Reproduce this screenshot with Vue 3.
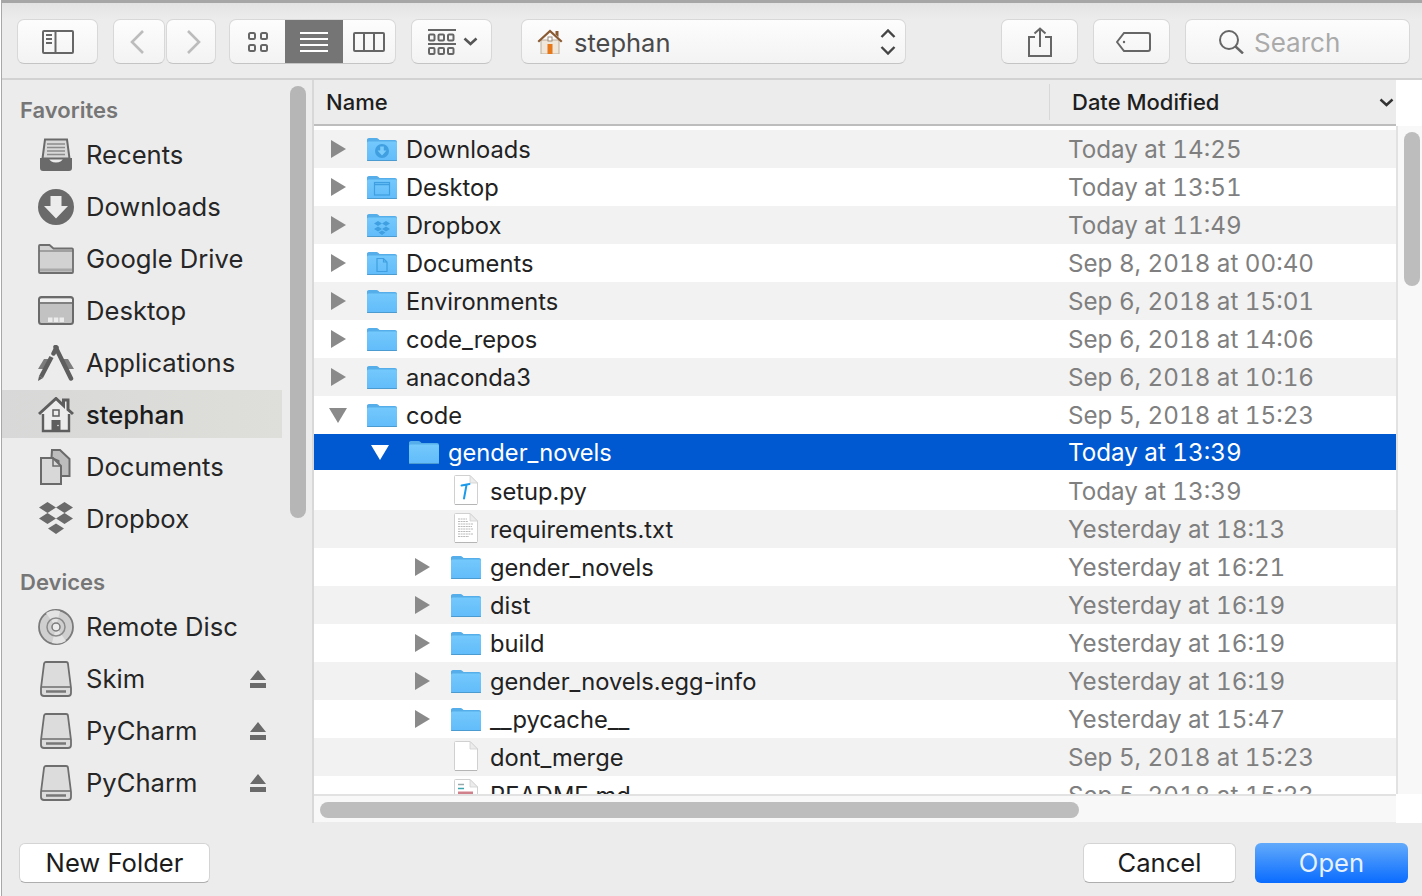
<script setup>
const favorites = [
  { label: 'Recents', icon: 'side-recents' },
  { label: 'Downloads', icon: 'side-downloads' },
  { label: 'Google Drive', icon: 'side-folder' },
  { label: 'Desktop', icon: 'side-desktop' },
  { label: 'Applications', icon: 'side-apps' },
  { label: 'stephan', icon: 'side-home', active: true },
  { label: 'Documents', icon: 'side-docs' },
  { label: 'Dropbox', icon: 'side-dropbox' }
]

const devices = [
  { label: 'Remote Disc', icon: 'side-disc' },
  { label: 'Skim', icon: 'side-drive', eject: true },
  { label: 'PyCharm', icon: 'side-drive', eject: true },
  { label: 'PyCharm', icon: 'side-drive', eject: true }
]

const rows = [
  { name: 'Downloads', date: 'Today at 14:25', level: 0, icon: 'folder-downloads', twisty: 'closed' },
  { name: 'Desktop', date: 'Today at 13:51', level: 0, icon: 'folder-desktop', twisty: 'closed' },
  { name: 'Dropbox', date: 'Today at 11:49', level: 0, icon: 'folder-dropbox', twisty: 'closed' },
  { name: 'Documents', date: 'Sep 8, 2018 at 00:40', level: 0, icon: 'folder-documents', twisty: 'closed' },
  { name: 'Environments', date: 'Sep 6, 2018 at 15:01', level: 0, icon: 'folder', twisty: 'closed' },
  { name: 'code_repos', date: 'Sep 6, 2018 at 14:06', level: 0, icon: 'folder', twisty: 'closed' },
  { name: 'anaconda3', date: 'Sep 6, 2018 at 10:16', level: 0, icon: 'folder', twisty: 'closed' },
  { name: 'code', date: 'Sep 5, 2018 at 15:23', level: 0, icon: 'folder', twisty: 'open' },
  { name: 'gender_novels', date: 'Today at 13:39', level: 1, icon: 'folder', twisty: 'open', selected: true },
  { name: 'setup.py', date: 'Today at 13:39', level: 2, icon: 'file-py' },
  { name: 'requirements.txt', date: 'Yesterday at 18:13', level: 2, icon: 'file-txt' },
  { name: 'gender_novels', date: 'Yesterday at 16:21', level: 2, icon: 'folder', twisty: 'closed' },
  { name: 'dist', date: 'Yesterday at 16:19', level: 2, icon: 'folder', twisty: 'closed' },
  { name: 'build', date: 'Yesterday at 16:19', level: 2, icon: 'folder', twisty: 'closed' },
  { name: 'gender_novels.egg-info', date: 'Yesterday at 16:19', level: 2, icon: 'folder', twisty: 'closed' },
  { name: '__pycache__', date: 'Yesterday at 15:47', level: 2, icon: 'folder', twisty: 'closed' },
  { name: 'dont_merge', date: 'Sep 5, 2018 at 15:23', level: 2, icon: 'file-blank' },
  { name: 'README.md', date: 'Sep 5, 2018 at 15:23', level: 2, icon: 'file-md' }
]
</script>

<template>
  <div class="window">
    <!-- shared icons -->
    <svg class="sprite" width="0" height="0">
      <defs>
        <linearGradient id="folderFill" x1="0" y1="0" x2="0" y2="1">
          <stop offset="0" stop-color="#74c9fc" />
          <stop offset="1" stop-color="#62bcfa" />
        </linearGradient>
        <symbol id="folder-base" viewBox="0 0 30 32">
          <path d="M0 7.500a2 2 0 0 1 2-2.500h7.500c1.500 0 2 1 3 2h15.500a2 2 0 0 1 2 2v17a2 2 0 0 1-2 2H2a2 2 0 0 1-2-2z" fill="#55aee9" />
          <path d="M0 10a1.500 1.500 0 0 1 1.500-1.500h27A1.500 1.500 0 0 1 30 10v16a1.500 1.500 0 0 1-1.500 1.500h-27A1.500 1.500 0 0 1 0 26z" fill="url(#folderFill)" />
          <rect x="0" y="27" width="30" height="1" rx=".5" fill="#4c9bd0" />
        </symbol>
        <symbol id="folder" viewBox="0 0 30 32"><use href="#folder-base" width="30" height="32" /></symbol>
        <symbol id="folder-downloads" viewBox="0 0 30 32">
          <use href="#folder-base" width="30" height="32" />
          <circle cx="15" cy="18" r="7" fill="#3f9fe0" />
          <path d="M13.200 13.500h3.600v4h2.700L15 22.500l-4.500-5h2.700z" fill="#7accfc" />
        </symbol>
        <symbol id="folder-desktop" viewBox="0 0 30 32">
          <use href="#folder-base" width="30" height="32" />
          <rect x="7.500" y="11.500" width="15" height="12.500" fill="none" stroke="#3f9fe0" stroke-width="1.200" />
          <path d="M7.500 13.500h15" stroke="#3f9fe0" stroke-width="1.500" />
        </symbol>
        <symbol id="folder-dropbox" viewBox="0 0 30 32">
          <use href="#folder-base" width="30" height="32" />
          <path d="M11 12l4 2.500-4 2.500-4-2.500zM19 12l4 2.500-4 2.500-4-2.500zM11 17.500l4 2.500-4 2.500-4-2.500zM19 17.500l4 2.500-4 2.500-4-2.500zM15 21.500l3.500 2-3.500 2.500-3.500-2.500z" fill="#3f9fe0" />
        </symbol>
        <symbol id="folder-documents" viewBox="0 0 30 32">
          <use href="#folder-base" width="30" height="32" />
          <path d="M10 11.500h6.500l3.500 3.500v9.500H10zM16.500 11.500V15H20" fill="none" stroke="#3f9fe0" stroke-width="1.200" />
        </symbol>
        <symbol id="file-blank" viewBox="0 0 30 32">
          <path d="M3.500 1.500A1 1 0 0 1 4.500.5h14.500l7.500 7.500v20.500a1 1 0 0 1-1 1h-21a1 1 0 0 1-1-1z" fill="#fff" stroke="#d0d0d0" />
          <path d="M19 .5V8h7.500z" fill="#ececec" stroke="#d0d0d0" stroke-width=".8" />
          <path d="M4 29.500h22" stroke="#b5b5b5" />
        </symbol>
        <symbol id="file-py" viewBox="0 0 30 32">
          <use href="#file-blank" width="30" height="32" />
          <path d="M10.500 10.500l8-1.500M15.500 10l-2.500 13.500" fill="none" stroke="#1d9bea" stroke-width="2" stroke-linecap="round" />
        </symbol>
        <symbol id="file-txt" viewBox="0 0 30 32">
          <use href="#file-blank" width="30" height="32" />
          <path d="M7 6h9M7 8.500h10M7 11h15M7 13.500h14M7 16h15M7 18.500h13M7 21h15M7 23.500h11" stroke="#a8a8a8" stroke-width=".8" stroke-dasharray="2 .6" />
        </symbol>
        <symbol id="file-md" viewBox="0 0 30 32">
          <use href="#file-blank" width="30" height="32" />
          <path d="M7 5.500h6" stroke="#9aa" stroke-width="1.500" />
          <path d="M7 9.500h6" stroke="#3ba4ad" stroke-width="1.500" />
          <path d="M7 14h15" stroke="#d0808a" stroke-width="3" />
        </symbol>

        <symbol id="side-recents" viewBox="0 0 36 36">
          <path d="M7 2.500h22l2.500 19h-27z" fill="#d9d9d9" stroke="#6a6a6a" stroke-width="2" />
          <path d="M9 7h18M9 10.500h18M9 14h18M9 17.500h18" stroke="#8c8c8c" stroke-width="1.500" />
          <path d="M2 21h9a7 4.500 0 0 0 14 0h9v10a3 3 0 0 1-3 3H5a3 3 0 0 1-3-3z" fill="#6a6a6a" />
        </symbol>
        <symbol id="side-downloads" viewBox="0 0 36 36">
          <circle cx="18" cy="18" r="18" fill="#6a6a6a" />
          <path d="M12.500 7h11v10h6.500L18 29.500 6 17h6.500z" fill="#ececec" />
        </symbol>
        <symbol id="side-folder" viewBox="0 0 36 36">
          <path d="M1 5a1 1 0 0 1 1-1h9.500l4 3.500H34a1 1 0 0 1 1 1V31a1 1 0 0 1-1 1H2a1 1 0 0 1-1-1z" fill="#d2d2d2" stroke="#6e6e6e" stroke-width="1.800" />
          <path d="M1 10h34" stroke="#6e6e6e" stroke-width="1.200" />
          <path d="M2 29h32" stroke="#a9a9a9" stroke-width="3" />
        </symbol>
        <symbol id="side-desktop" viewBox="0 0 36 36">
          <rect x="1" y="4" width="34" height="27" rx="2.500" fill="#c2c2c2" stroke="#6a6a6a" stroke-width="2" />
          <path d="M2 7.500h32" stroke="#f0f0f0" stroke-width="3" />
          <path d="M2 10h32" stroke="#6a6a6a" stroke-width="1.500" />
          <path d="M10 24.500h4.500v4.500H10zM15.800 24.500h4.500v4.500h-4.500zM21.500 24.500H26v4.500h-4.500z" fill="#ececec" />
        </symbol>
        <symbol id="side-apps" viewBox="0 0 36 36">
          <path d="M6 14h24l6 10H0z" fill="#7c7c7c" />
          <path d="M13 14h10l4 10H9z" fill="#ececec" />
          <path d="M17.500 2L33 33.500" stroke="#5e5e5e" stroke-width="4.500" stroke-linecap="round" fill="none" />
          <path d="M18.500 2.500l-3 6" stroke="#5e5e5e" stroke-width="4.500" stroke-linecap="round" />
          <path d="M13.500 12L3 32" stroke="#5e5e5e" stroke-width="4.500" fill="none" />
          <path d="M0 36l1-5 4 2z" fill="#5e5e5e" />
        </symbol>
        <symbol id="side-home" viewBox="0 0 36 36">
          <path d="M5 14.500V34h26V14.500" fill="#ececec" stroke="#5e5e5e" stroke-width="2.400" />
          <path d="M1 17L18 1.500l7.500 7V3h4.500v9.500L35 17" fill="#ececec" stroke="#5e5e5e" stroke-width="3" />
          <rect x="15" y="13" width="6" height="6" fill="#ececec" stroke="#5e5e5e" stroke-width="1.500" />
          <path d="M13.500 23h9v11h-9z" fill="#5e5e5e" />
          <circle cx="20" cy="28.500" r=".8" fill="#ececec" />
        </symbol>
        <symbol id="side-docs" viewBox="0 0 36 36">
          <path d="M14 1h8l9.500 9v17h-11V12l-7-3z" fill="#bdbdbd" stroke="#6a6a6a" stroke-width="2" />
          <path d="M3 9h12l8 8v18H3z" fill="#d8d8d8" stroke="#6a6a6a" stroke-width="2" />
          <path d="M15 9v8h8" fill="none" stroke="#6a6a6a" stroke-width="1.500" />
        </symbol>
        <symbol id="side-dropbox" viewBox="0 0 36 36">
          <path d="M9.500 1l8.500 5.500-8.500 5.500L1 6.500zM26.500 1L35 6.500 26.500 12 18 6.500zM9.500 12L18 17.500 9.500 23 1 17.500zM26.500 12l8.500 5.500L26.500 23 18 17.500zM18 22.500l8 5-8 5.500-8-5.500z" fill="#6a6a6a" />
        </symbol>
        <symbol id="side-disc" viewBox="0 0 36 36">
          <circle cx="18" cy="18" r="17" fill="#cfcfcf" stroke="#7a7a7a" stroke-width="1.800" />
          <path d="M18 18L8 4A17 17 0 0 1 22 2zM18 18l10 14a17 17 0 0 1-14 2z" fill="#e4e4e4" />
          <circle cx="18" cy="18" r="9" fill="none" stroke="#8a8a8a" stroke-width="1.500" />
          <circle cx="18" cy="18" r="4" fill="#ececec" stroke="#7a7a7a" stroke-width="1.500" />
        </symbol>
        <symbol id="side-drive" viewBox="0 0 36 36">
          <path d="M6 3a2 2 0 0 1 2-2h20a2 2 0 0 1 2 2l3 24v5a3 3 0 0 1-3 3H6a3 3 0 0 1-3-3v-5z" fill="#dcdcdc" stroke="#6e6e6e" stroke-width="1.800" />
          <path d="M3.500 26h29" stroke="#6e6e6e" stroke-width="1.500" />
          <path d="M8 30.500h20" stroke="#777" stroke-width="2.500" />
        </symbol>
      </defs>
    </svg>

    <header class="toolbar">
      <button class="tool tool-side">
        <svg width="32" height="24" viewBox="0 0 32 24" fill="none" stroke="#666" stroke-width="2">
          <rect x="1" y="1" width="30" height="22" rx="1" />
          <path d="M13.500 1v22M4 5h6M4 9h6M4 13h6" />
        </svg>
      </button>
      <div class="group nav">
        <button class="tool tool-nav">
          <svg class="chev-back" width="14" height="24" viewBox="0 0 14 24" fill="none" stroke="#bcbcbc" stroke-width="2.600"><path d="M13 1L2 12l11 11" /></svg>
        </button>
        <button class="tool tool-nav">
          <svg class="chev-next" width="14" height="24" viewBox="0 0 14 24" fill="none" stroke="#bcbcbc" stroke-width="2.600"><path d="M1 1l11 11L1 23" /></svg>
        </button>
      </div>
      <div class="tool views">
        <span class="seg seg-icons">
          <svg width="22" height="22" viewBox="0 0 22 22" fill="none" stroke="#666" stroke-width="2">
            <rect x="2" y="2" width="6" height="6" rx="1.500" />
            <rect x="14" y="2" width="6" height="6" rx="1.500" />
            <rect x="2" y="14" width="6" height="6" rx="1.500" />
            <rect x="14" y="14" width="6" height="6" rx="1.500" />
          </svg>
        </span>
        <span class="seg seg-list">
          <svg width="28" height="20" viewBox="0 0 28 20" stroke="#fff" stroke-width="2"><path d="M0 1h28M0 7h28M0 13h28M0 19h28" /></svg>
        </span>
        <span class="seg seg-cols">
          <svg width="32" height="20" viewBox="0 0 32 20" fill="none" stroke="#666" stroke-width="2">
            <rect x="1" y="1" width="30" height="18" rx="1" />
            <path d="M11 1v18M21 1v18" />
          </svg>
        </span>
      </div>
      <button class="tool tool-arrange">
        <svg width="29" height="26" viewBox="0 0 29 26" fill="none" stroke="#666" stroke-width="2">
          <path d="M1 1h28M1 15h28" />
          <rect x="2" y="5.500" width="5.500" height="6" rx="1" />
          <rect x="11.500" y="5.500" width="5.500" height="6" rx="1" />
          <rect x="21" y="5.500" width="5.500" height="6" rx="1" />
          <rect x="2" y="19" width="5.500" height="6" rx="1" />
          <rect x="11.500" y="19" width="5.500" height="6" rx="1" />
          <rect x="21" y="19" width="5.500" height="6" rx="1" />
        </svg>
        <svg width="15" height="9" viewBox="0 0 15 9" fill="none" stroke="#555" stroke-width="2.600"><path d="M1.500 1.500l6 5.500 6-5.500" /></svg>
      </button>
      <div class="tool path">
        <svg width="26" height="25" viewBox="0 0 26 25">
          <path d="M4 11h18v14H4z" fill="#efe7da" stroke="#bcae9c" />
          <path d="M0.500 12L13 .5 25.500 12l-1.500 1.500L13 3.500 2 13.500z" fill="#8a5a32" />
          <path d="M18.500 2h3v6l-3-2.500z" fill="#8a5a32" />
          <rect x="11" y="8" width="4" height="4" fill="#fff" stroke="#9a8a78" />
          <rect x="10.500" y="15" width="5" height="10" fill="#e8791a" />
        </svg>
        <span class="path-name">stephan</span>
        <svg class="updown" width="16" height="26" viewBox="0 0 16 26" fill="none" stroke="#444" stroke-width="2.400">
          <path d="M1.500 8L8 1.500 14.500 8M1.500 18L8 24.500 14.500 18" />
        </svg>
      </div>
      <button class="tool tool-share">
        <svg width="24" height="30" viewBox="0 0 24 30" fill="none" stroke="#666" stroke-width="2">
          <path d="M7 10H1v19h22V10h-6M12 20V1.500M6.500 6.500L12 1.500l5.500 5" />
        </svg>
      </button>
      <button class="tool tool-tag">
        <svg class="tag-icon" width="35" height="20" viewBox="0 0 35 20" fill="none" stroke="#666" stroke-width="2">
          <path d="M8 1h24a2 2 0 0 1 2 2v14a2 2 0 0 1-2 2H8l-7-9z" />
          <circle cx="8" cy="10" r="1.200" fill="#666" stroke="none" />
        </svg>
      </button>
      <div class="tool search">
        <svg width="26" height="24" viewBox="0 0 26 24" fill="none" stroke="#666" stroke-width="2">
          <circle cx="10" cy="10" r="9" />
          <path d="M16.500 16.500L24 23.500" stroke-width="2.400" />
        </svg>
        <span class="search-text">Search</span>
      </div>
    </header>

    <div class="content">
      <aside class="sidebar">
        <div class="side-label">Favorites</div>
        <ul class="side-list">
          <li v-for="item in favorites" :key="item.label" class="side-row" :class="{ active: item.active }">
            <svg class="side-icon" width="36" height="36"><use :href="'#' + item.icon" width="36" height="36" /></svg>
            <span class="side-text">{{ item.label }}</span>
          </li>
        </ul>
        <div class="side-label side-label-devices">Devices</div>
        <ul class="side-list">
          <li v-for="(item, i) in devices" :key="i" class="side-row">
            <svg class="side-icon" width="36" height="36"><use :href="'#' + item.icon" width="36" height="36" /></svg>
            <span class="side-text">{{ item.label }}</span>
            <svg v-if="item.eject" class="eject" width="16" height="18" viewBox="0 0 16 18" fill="#6a6a6a">
              <path d="M8 0l8 10H0zM0 13h16v5H0z" />
            </svg>
          </li>
        </ul>
        <div class="side-thumb"></div>
      </aside>

      <section class="browser">
        <div class="col-head">
          <div class="col-name">Name</div>
          <div class="col-date">Date Modified</div>
          <svg class="sort" width="15" height="9" viewBox="0 0 15 9" fill="none" stroke="#333" stroke-width="2.400"><path d="M1.500 1.500l6 5.500 6-5.500" /></svg>
        </div>
        <div class="corner"></div>

        <div class="list">
          <div
            v-for="row in rows"
            :key="row.name + row.date"
            class="row"
            :class="{ selected: row.selected }"
            :style="{ paddingLeft: 17 + row.level * 42 + 'px' }"
          >
            <span class="twisty">
              <svg v-if="row.twisty === 'closed'" width="15" height="18" viewBox="0 0 15 18"><path d="M0 0l15 9-15 9z" /></svg>
              <svg v-else-if="row.twisty === 'open'" class="twisty-open" width="18" height="15" viewBox="0 0 18 15"><path d="M0 0h18l-9 15z" /></svg>
            </span>
            <svg class="row-icon" width="30" height="32"><use :href="'#' + row.icon" width="30" height="32" /></svg>
            <span class="row-name">{{ row.name }}</span>
            <span class="row-date">{{ row.date }}</span>
          </div>
        </div>
        <div class="vtrack"><div class="vthumb"></div></div>

        <div class="htrack"><div class="hthumb"></div></div>
        <div class="corner"></div>
      </section>
    </div>

    <footer class="footer">
      <button class="btn">New Folder</button>
      <div class="footer-right">
        <button class="btn btn-cancel">Cancel</button>
        <button class="btn btn-open">Open</button>
      </div>
    </footer>
  </div>
</template>

<style>
html, body { margin: 0; background: #fff; }
</style>

<style scoped>
.window {
  width: 1421px;
  height: 896px;
  margin-left: 1px;
  box-sizing: border-box;
  border-left: 1px solid #a8a8a8;
  border-top: 3px solid #a6a6a6;
  background: #ececec;
  display: flex;
  flex-direction: column;
  overflow: hidden;
  font-family: Inter, "Liberation Sans", sans-serif;
  font-size: 25.6px;
  color: #262626;
}
.sprite { display: block; flex: none; height: 0; }

.toolbar {
  flex: none;
  height: 77px;
  box-sizing: border-box;
  padding: 16px 0 0 15px;
  display: flex;
  align-items: flex-start;
  border-bottom: 2px solid #d2d2d2;
  background: linear-gradient(#e3e3e3, #ececec 16px);
}
.tool {
  height: 45px;
  box-sizing: border-box;
  padding: 0;
  display: flex;
  align-items: center;
  justify-content: center;
  border: 1px solid #d8d8d8;
  border-bottom-color: #c4c4c4;
  border-radius: 7px;
  background: linear-gradient(#fdfdfd, #f3f3f3);
}
.tool-side { width: 81px; margin-right: 15px; }
.group.nav { display: flex; gap: 1px; margin-right: 13px; }
.tool-nav { width: 52px; }
.tool-nav + .tool-nav { width: 50px; }
.chev-back { margin-right: 5px; }
.chev-next { margin-left: 5px; }
.views { width: 167px; margin-right: 15px; overflow: hidden; justify-content: flex-start; }
.seg { height: 100%; display: flex; align-items: center; justify-content: center; }
.seg-icons { width: 55px; }
.seg-list { width: 58px; background: #757575; }
.seg-cols { flex: 1; }
.tool-arrange { width: 81px; gap: 7px; padding-left: 2px; margin-right: 29px; }
.path {
  width: 385px;
  justify-content: flex-start;
  padding: 0 9px 0 15px;
  margin-right: 95px;
  color: #4a4a4a;
}
.path-name { margin-left: 11px; font-size: 25.5px; flex: 1; padding-top: 2px; }
.tool-share { width: 77px; margin-right: 15px; }
.tool-tag { width: 77px; margin-right: 15px; }
.tag-icon { margin-left: 3px; }
.search {
  width: 225px;
  justify-content: flex-start;
  padding-left: 33px;
  gap: 9px;
}
.search-text { color: #aaa; font-size: 26px; padding-top: 2px; }

.content { flex: none; height: 743px; display: flex; }

.sidebar {
  position: relative;
  width: 312px;
  flex: none;
  padding: 15px 30px 0 0;
  box-sizing: border-box;
  border-right: 2px solid #d8d8d8;
}
.side-label {
  height: 30px;
  line-height: 30px;
  margin: 0 0 6px 18px;
  font-size: 22px;
  font-weight: 600;
  color: #767676;
}
.side-label-devices { margin-top: 24px; }
.side-list {
  list-style: none;
  margin: 0;
  padding: 0;
  display: flex;
  flex-direction: column;
  gap: 4px;
}
.side-row {
  height: 48px;
  box-sizing: border-box;
  display: flex;
  align-items: center;
  padding: 0 16px 0 36px;
  gap: 12px;
}
.side-text { margin-top: -2px; }
.side-row.active {
  margin: -1px 0 1px;
  padding-top: 2px;
  background: linear-gradient(90deg, #d8d8d8, #dededa);
  font-weight: 500;
  color: #1c1c1c;
}
.side-icon { flex: none; }
.eject { margin-left: auto; }
.side-thumb {
  position: absolute;
  left: 288px;
  top: 6px;
  width: 16px;
  height: 432px;
  border-radius: 8px;
  background: #b6b6b6;
}

.browser {
  flex: 1;
  min-width: 0;
  display: grid;
  grid-template-columns: 1082px 26px;
  grid-template-rows: 46px 668px 29px;
}
.col-head {
  display: flex;
  align-items: center;
  box-sizing: border-box;
  border-bottom: 2px solid #bdbdbd;
  background: #ececec;
  font-size: 22px;
  font-weight: 500;
  color: #1e1e1e;
}
.col-name { width: 735px; padding-left: 12px; box-sizing: border-box; }
.col-date {
  flex: 1;
  height: 36px;
  line-height: 36px;
  padding-left: 22px;
  border-left: 1px solid #d8d8d8;
}
.sort { margin-right: 2px; }
.corner { background: #fff; }

.list {
  overflow: hidden;
  padding-top: 4px;
  box-sizing: border-box;
  background: #fff;
  font-size: 23.7px;
  color: #222;
}
.row {
  height: 38px;
  box-sizing: border-box;
  display: flex;
  align-items: center;
}
.row:nth-child(odd) { background: #f2f2f2; }
.row.selected {
  height: 36px;
  margin-bottom: 2px;
  background: #0059d1;
  color: #fff;
}
.twisty {
  width: 36px;
  flex: none;
  display: flex;
  align-items: center;
  fill: #8a8a8a;
}
.twisty-open { margin-left: -2px; }
.selected .twisty { fill: #fff; }
.row-icon { flex: none; margin-right: 9px; }
.row-name { flex: 1; min-width: 0; white-space: nowrap; padding-top: 1px; }
.row-date {
  width: 328px;
  flex: none;
  color: #7f7f7f;
  white-space: nowrap;
  font-size: 24.2px;
  font-variant-numeric: tabular-nums;
}
.selected .row-date { color: #fff; }

.vtrack {
  box-sizing: border-box;
  border-left: 2px solid #e2e2e2;
  background: #f8f8f8;
  padding: 6px 2px 0 6px;
}
.vthumb { height: 154px; border-radius: 8px; background: #bdbdbd; }
.htrack {
  box-sizing: border-box;
  border-top: 2px solid #e2e2e2;
  border-bottom: 1px solid #ececec;
  background: #f8f8f8;
  padding: 6px 0 0 6px;
}
.hthumb { width: 759px; height: 16px; border-radius: 8px; background: #bdbdbd; }

.footer {
  flex: 1;
  display: flex;
  align-items: flex-start;
  justify-content: space-between;
  padding: 20px 14px 0 17px;
}
.footer-right { display: flex; gap: 19px; }
.btn {
  width: 191px;
  height: 40px;
  box-sizing: border-box;
  padding: 0 0 2px;
  border: 1px solid #d4d4d4;
  border-bottom-color: #aeaeae;
  border-radius: 6px;
  background: #fff;
  font: inherit;
  color: #1c1c1c;
}
.btn-cancel { width: 153px; }
.btn-open {
  width: 153px;
  border: none;
  background: linear-gradient(#62aafb, #0a6cff);
  color: #e8f2ff;
}
</style>
